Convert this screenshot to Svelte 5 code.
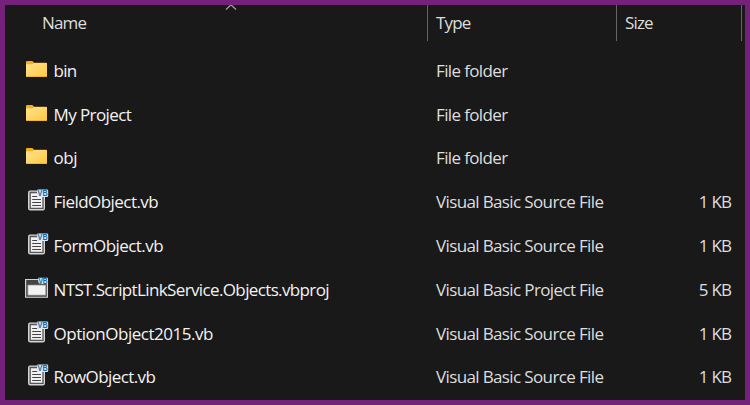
<script>
  const source = 'Visual Basic Source File';
  const files = [
    { name: 'bin', kind: 'folder', type: 'File folder', size: '', tracking: -0.75 },
    { name: 'My Project', kind: 'folder', type: 'File folder', size: '', tracking: -0.6 },
    { name: 'obj', kind: 'folder', type: 'File folder', size: '', tracking: -0.5 },
    { name: 'FieldObject.vb', kind: 'source', type: source, size: '1 KB', tracking: -0.55 },
    { name: 'FormObject.vb', kind: 'source', type: source, size: '1 KB', tracking: -0.55 },
    { name: 'NTST.ScriptLinkService.Objects.vbproj', kind: 'project', type: 'Visual Basic Project File', size: '5 KB', tracking: -0.63 },
    { name: 'OptionObject2015.vb', kind: 'source', type: source, size: '1 KB', tracking: -0.48 },
    { name: 'RowObject.vb', kind: 'source', type: source, size: '1 KB', tracking: -0.6 }
  ];
</script>

<main class="explorer">
  <header class="columns">
    <div class="heading name-heading">
      <span>Name</span>
      <svg class="sort" width="12" height="7" viewBox="0 0 12 7"><path d="M1 5.5 6 .8l5 4.7" fill="none" stroke="#a8a8a8" stroke-width="1.1" /></svg>
    </div>
    <div class="heading type-heading"><span>Type</span></div>
    <div class="heading size-heading"><span>Size</span></div>
  </header>

  {#each files as file}
    <div class="row">
      <div class="icon">
        {#if file.kind === 'folder'}
          <svg width="24" height="24" viewBox="0 -1 24 24">
            <defs>
              <linearGradient id="folder-face" x1="0" y1="0" x2="1" y2="1">
                <stop offset="0" stop-color="#ffe493" />
                <stop offset="1" stop-color="#ffc93b" />
              </linearGradient>
            </defs>
            <path d="M1 3q0-1 1-1h5.4l1.7 1.7H21q1 0 1 1V9H1z" fill="#f6ae1c" />
            <path d="M1 6q0-.7.7-.7h6l1.5-1.4h12.1q.7 0 .7.7V17q0 .9-.9.9H1.9Q1 17.9 1 17z" fill="url(#folder-face)" />
            <path d="M1.2 17.5h20.6" stroke="#e9aa28" stroke-width=".7" />
          </svg>
        {:else if file.kind === 'source'}
          <svg width="24" height="24" viewBox="0 0 24 24">
            <path d="M5 1.5h15v17.8q0 2.2-2.2 2.2H5.5q-2.5 0-2.5-2.5V3.5q0-2 2-2z" fill="#d4d4d4" />
            <path d="M5.2 3.5H18v15.8H5.2z" fill="#f1f1f1" stroke="#555" stroke-width="1.3" />
            <path d="M7.2 7.5h5M7.2 10.5H16M7.2 13.5H16M7.2 16.5H16" stroke="#444" stroke-width="1.2" />
            <rect x="12" y="0.6" width="11.2" height="7.4" rx="1.2" fill="#dbeaf5" />
            <text class="badge" x="12.6" y="7.3" textLength="10" lengthAdjust="spacingAndGlyphs">VB</text>
          </svg>
        {:else}
          <svg width="24" height="24" viewBox="0 0 24 24">
            <path d="M.6 2.5h21.8v17.8H.6z" fill="#444" stroke="#d1d1d1" stroke-width="1.2" />
            <path d="M2.8 8h18v10.2h-18z" fill="#f2f2f4" stroke="#8c8c8c" stroke-width=".7" />
            <path d="M0 20.5h23" stroke="#aaa" />
            <path d="M13.2.8h9.6v6.2H15l-1.8-2z" fill="#dbeaf5" />
            <text class="badge" x="13.4" y="6.8" textLength="9.2" lengthAdjust="spacingAndGlyphs">VB</text>
          </svg>
        {/if}
      </div>
      <div class="name" style:letter-spacing="{file.tracking}px">{file.name}</div>
      <div class="type">{file.type}</div>
      <div class="size">{file.size}</div>
    </div>
  {/each}
</main>

<style>
  .explorer {
    box-sizing: border-box;
    width: 750px;
    height: 405px;
    overflow: hidden;
    border: 5px solid #74217a;
    background: #191919;
    color: #dedede;
    font: 17px/22px "Open Sans", "Noto Sans", sans-serif;
    letter-spacing: -0.63px;
    white-space: nowrap;
  }
  .columns {
    display: grid;
    grid-template-columns: 423px 189px 125px;
    height: 44px;
    letter-spacing: -0.85px;
  }
  .heading {
    box-sizing: border-box;
    height: 36px;
    padding: 7px 0 0 8px;
    border-right: 1px solid #646464;
  }
  .name-heading {
    position: relative;
    padding-left: 37px;
  }
  .sort {
    position: absolute;
    left: 220px;
    top: -1px;
  }
  .row {
    display: grid;
    grid-template-columns: 28.5px 382.5px 189px 106px;
    align-items: center;
    height: 43.8px;
    padding-left: 20px;
  }
  .icon {
    height: 26px;
  }
  .icon svg {
    display: block;
    overflow: visible;
  }
  .name {
    color: #f3f3f3;
  }
  .size {
    text-align: right;
    letter-spacing: -1px;
    word-spacing: 0.8px;
  }
  .badge {
    font: 700 8.5px/8px "Liberation Sans", sans-serif;
    letter-spacing: 0;
    fill: #1969a8;
  }
</style>
